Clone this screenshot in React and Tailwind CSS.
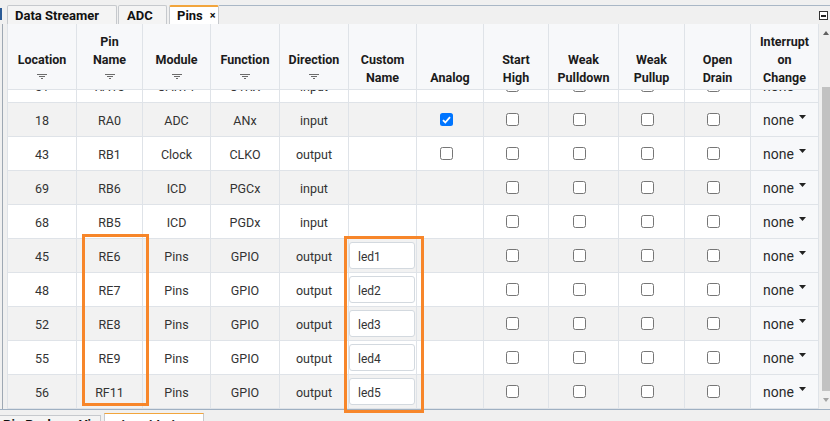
import React from 'react'

const GRID =
  'grid grid-cols-[69px_66px_68px_69px_69px_68px_67px_65px_70px_66px_66px_68px]'

const HEADERS = [
  { lines: ['Location'], filter: true },
  { lines: ['Pin', 'Name'], filter: true },
  { lines: ['Module'], filter: true },
  { lines: ['Function'], filter: true },
  { lines: ['Direction'], filter: true },
  { lines: ['Custom', 'Name'] },
  { lines: ['Analog'] },
  { lines: ['Start', 'High'] },
  { lines: ['Weak', 'Pulldown'] },
  { lines: ['Weak', 'Pullup'] },
  { lines: ['Open', 'Drain'] },
  { lines: ['Interrupt', 'on', 'Change'] },
]

const ROWS = [
  { loc: '51', pin: 'RA15', mod: 'UART1', fn: 'U1RX', dir: 'input' },
  { loc: '18', pin: 'RA0', mod: 'ADC', fn: 'ANx', dir: 'input', analog: true },
  { loc: '43', pin: 'RB1', mod: 'Clock', fn: 'CLKO', dir: 'output', analog: false },
  { loc: '69', pin: 'RB6', mod: 'ICD', fn: 'PGCx', dir: 'input' },
  { loc: '68', pin: 'RB5', mod: 'ICD', fn: 'PGDx', dir: 'input' },
  { loc: '45', pin: 'RE6', mod: 'Pins', fn: 'GPIO', dir: 'output', custom: 'led1' },
  { loc: '48', pin: 'RE7', mod: 'Pins', fn: 'GPIO', dir: 'output', custom: 'led2' },
  { loc: '52', pin: 'RE8', mod: 'Pins', fn: 'GPIO', dir: 'output', custom: 'led3' },
  { loc: '55', pin: 'RE9', mod: 'Pins', fn: 'GPIO', dir: 'output', custom: 'led4' },
  { loc: '56', pin: 'RF11', mod: 'Pins', fn: 'GPIO', dir: 'output', custom: 'led5' },
]

const cell = 'h-[34px] border-r border-b border-[#dfe3e8] flex items-center justify-center'

function FilterIcon() {
  return (
    <svg width="10" height="6" viewBox="0 0 10 6" className="block">
      <path d="M0 0.5h10M2 2.5h6M4 4.5h2" stroke="#6b6b6b" strokeWidth="1" />
    </svg>
  )
}

function Checkbox({ checked }) {
  if (checked) {
    return (
      <span className="w-[13px] h-[13px] rounded-[2.5px] bg-[#0075ff] flex items-center justify-center">
        <svg width="9" height="8" viewBox="0 0 9 8">
          <path d="M1 4.2l2.3 2.3L8 1.2" fill="none" stroke="#fff" strokeWidth="1.8" />
        </svg>
      </span>
    )
  }
  return <span className="w-[13px] h-[13px] rounded-[2.5px] border border-[#767676] bg-white" />
}

function CheckCell({ show = true, checked, bg }) {
  return (
    <div className={`${cell} ${bg} pr-[8px]`}>{show && <Checkbox checked={checked} />}</div>
  )
}

function Row({ row, i }) {
  const bg = i % 2 === 1 ? 'bg-[#f2f2f2]' : 'bg-white'
  const txt = `${cell} ${bg} pt-[3px]`
  return (
    <div className={`${GRID} text-[12.5px] text-[#333] ${i === 0 ? 'mt-[-21px]' : ''}`}>
      <div className={txt}>{row.loc}</div>
      <div className={txt}>{row.pin}</div>
      <div className={txt}>{row.mod}</div>
      <div className={txt}>{row.fn}</div>
      <div className={txt}>{row.dir}</div>
      <div className={`h-[34px] border-r border-b border-[#dfe3e8] ${bg} pt-[3px] pb-[3px] pr-[1px]`}>
        {row.custom && (
          <div className="h-[27px] rounded-[3px] border border-[#d3d9df] bg-white flex items-center pl-[8px] pt-[2px] text-[12px]">
            {row.custom}
          </div>
        )}
      </div>
      <CheckCell bg={bg} show={row.analog !== undefined} checked={row.analog} />
      <CheckCell bg={bg} />
      <CheckCell bg={bg} />
      <CheckCell bg={bg} />
      <CheckCell bg={bg} />
      <div className={`${cell} bg-[#f7f8fa] text-[14px] text-[#2a2a2a] gap-[5px] pt-[2px]`}>
        <span>none</span>
        <svg width="7" height="4" viewBox="0 0 7 4" className="mb-[7px]">
          <path d="M0 0h7L3.5 4z" fill="#222" />
        </svg>
      </div>
    </div>
  )
}

export default function App() {
  return (
    <div className="relative w-[830px] h-[421px] overflow-hidden bg-[#f0f0f0] font-[Roboto,sans-serif]">
      {/* Top tabs */}
      <div className="h-[24px] flex items-end">
        <div className="w-[7px] self-stretch pt-[8px]">
          <div className="w-[2px] h-[12px] bg-[#2b5b96]" />
        </div>
        <div className="h-[19px] w-[110px] border border-b-0 border-[#c6c9cd] rounded-t-[2px] bg-[#f4f4f4] pl-[7px] pt-[1px] flex items-center text-[13px] font-bold text-[#111]">
          Data Streamer
        </div>
        <div className="h-[19px] w-[49px] ml-[1px] border border-b-0 border-[#c6c9cd] rounded-t-[2px] bg-[#f4f4f4] pl-[8px] pt-[1px] flex items-center text-[13px] font-bold text-[#111]">
          ADC
        </div>
        <div className="h-[19px] w-[50px] ml-[2px] border border-b-0 border-t-2 border-[#c6c9cd] border-t-[#f2a53c] rounded-t-[2px] bg-white pl-[7px] flex items-center gap-[7px] text-[13px] font-bold text-[#111]">
          Pins
          <span className="text-[11px] leading-none">×</span>
        </div>
        <div className="flex-1 self-stretch pt-[5px]">
          <div className="h-full border-t border-[#a9b7c6] flex justify-end pt-[5px] pr-[2px]">
            <div className="w-[9px] h-[9px] border border-[#333] bg-white flex items-center justify-center">
              <div className="w-[5px] h-[2px] bg-[#222]" />
            </div>
          </div>
        </div>
      </div>

      {/* Table area */}
      <div className="flex h-[385px]">
        <div className="w-[7px] pl-[2px]">
          <div className="w-[1px] h-full bg-[#9ea8b3]" />
        </div>

        <div className="w-[812px] border-l border-[#dfe3e8] flex flex-col">
          <div className={`${GRID} bg-[#f7f8fa] text-[12.5px] font-bold text-[#1b1b1b]`}>
            {HEADERS.map((h, i) => (
              <div
                key={i}
                className="h-[66px] border-r border-b border-[#dfe3e8] flex flex-col justify-end items-center pb-[4px]"
              >
                {h.lines.map((l) => (
                  <div key={l} className="h-[18px] leading-[21px]">
                    {l}
                  </div>
                ))}
                {h.filter && (
                  <div className="h-[18px] flex items-center pt-[1px]">
                    <FilterIcon />
                  </div>
                )}
              </div>
            ))}
          </div>
          <div className="h-[319px] overflow-hidden">
            {ROWS.map((r, i) => (
              <Row key={i} row={r} i={i} />
            ))}
          </div>
        </div>

        {/* Scrollbar */}
        <div className="w-[11px] bg-[#f0f0f0] flex flex-col">
          <div className="h-[7px]" />
          <svg width="6" height="4" viewBox="0 0 6 4" className="ml-[4px]">
            <path d="M0 4h6L3 0z" fill="#606060" />
          </svg>
          <div className="h-[52px]" />
          <div className="ml-[3px] w-[8px] h-[304px] bg-[#c2c2c2]" />
          <div className="h-[7px]" />
          <svg width="6" height="4" viewBox="0 0 6 4" className="ml-[4px]">
            <path d="M0 0h6L3 4z" fill="#a3a3a3" />
          </svg>
        </div>
      </div>

      {/* Bottom tabs */}
      <div className="h-[1px] bg-[#9fb0c2]" />
      <div className="h-[11px] flex items-end">
        <div className="h-[6px] w-[101px] border-t border-r border-[#c6c9cd] bg-[#f4f4f4] overflow-hidden pl-[3px] pt-[1px] text-[13px] font-bold text-[#111] leading-[16px] whitespace-nowrap">
          Pin Package View
        </div>
        <div className="h-[8px] w-[100px] ml-[3px] border border-b-0 border-[#c6c9cd] border-t-[#f2a53c] bg-white overflow-hidden pl-[8px] pt-[4px] text-[13px] font-bold text-[#111] leading-[16px] whitespace-nowrap">
          Pin Grid View
        </div>
      </div>

      {/* Highlight overlays */}
      <div className="absolute left-[82px] top-[234px] w-[67px] h-[172px] border-[3px] border-[#f7862a]" />
      <div className="absolute left-[344px] top-[236px] w-[80px] h-[177px] border-[3px] border-[#f7862a]" />
    </div>
  )
}
